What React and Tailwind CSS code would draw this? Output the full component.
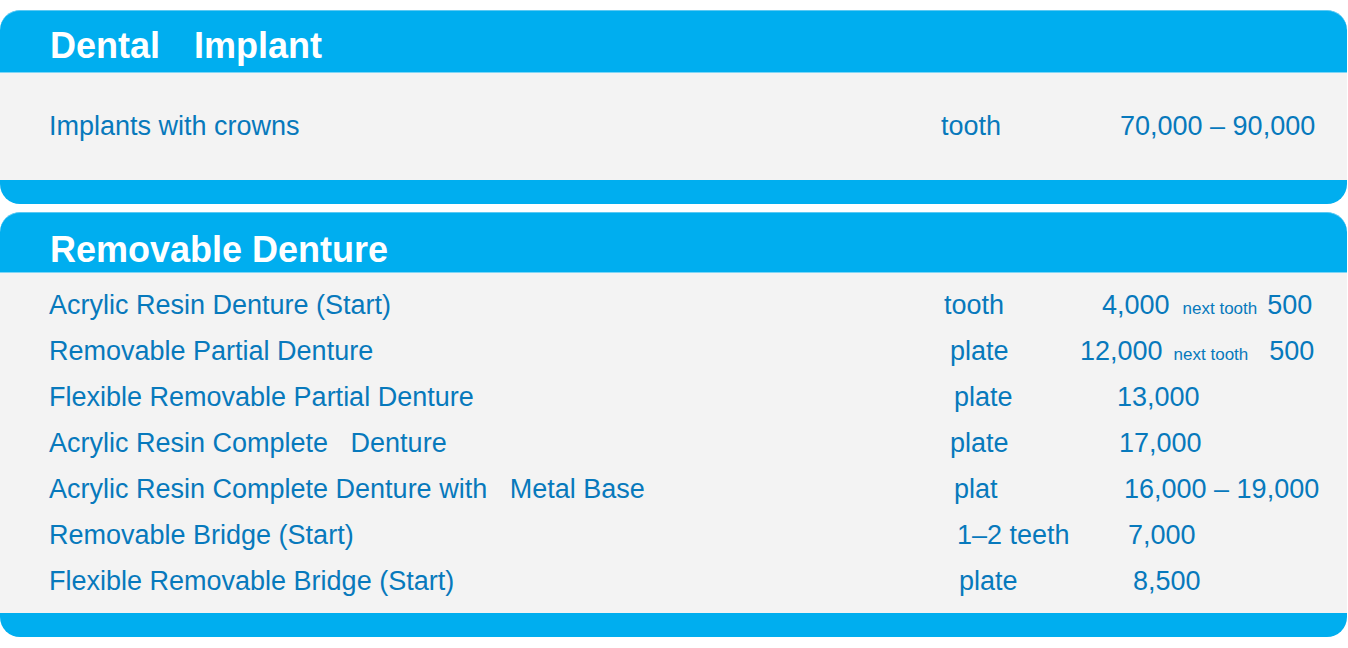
const IMPLANT_ROWS = [
  {
    name: "Implants with crowns",
    unit: "tooth",
    price: "70,000 – 90,000",
    nameW: "w-[892px]",
    unitW: "w-[179px]",
  },
];

const DENTURE_ROWS = [
  {
    name: "Acrylic Resin Denture (Start)",
    unit: "tooth",
    price: "4,000",
    nameW: "w-[895px]",
    unitW: "w-[158px]",
    next: { gap1: "ml-[13px]", gap2: "ml-[10px]", value: "500" },
  },
  {
    name: "Removable Partial Denture",
    unit: "plate",
    price: "12,000",
    nameW: "w-[901px]",
    unitW: "w-[130px]",
    next: { gap1: "ml-[11px]", gap2: "ml-[21px]", value: "500" },
  },
  {
    name: "Flexible Removable Partial Denture",
    unit: "plate",
    price: "13,000",
    nameW: "w-[905px]",
    unitW: "w-[163px]",
  },
  {
    name: "Acrylic Resin Complete   Denture",
    unit: "plate",
    price: "17,000",
    nameW: "w-[901px]",
    unitW: "w-[169px]",
  },
  {
    name: "Acrylic Resin Complete Denture with   Metal Base",
    unit: "plat",
    price: "16,000 – 19,000",
    nameW: "w-[905px]",
    unitW: "w-[170px]",
  },
  {
    name: "Removable Bridge (Start)",
    unit: "1–2 teeth",
    price: "7,000",
    nameW: "w-[908px]",
    unitW: "w-[171px]",
  },
  {
    name: "Flexible Removable Bridge (Start)",
    unit: "plate",
    price: "8,500",
    nameW: "w-[910px]",
    unitW: "w-[174px]",
  },
];

function PriceRow({ row }) {
  return (
    <div className="flex h-[46px] items-center pl-[49px] text-[27px] leading-none text-[#0779bc]">
      <span className={`shrink-0 whitespace-pre ${row.nameW}`}>{row.name}</span>
      <span className={`shrink-0 whitespace-pre ${row.unitW}`}>{row.unit}</span>
      <span className="flex items-baseline whitespace-pre">
        {row.price}
        {row.next && (
          <>
            <span className={`text-[17px] ${row.next.gap1}`}>next tooth</span>
            <span className={row.next.gap2}>{row.next.value}</span>
          </>
        )}
      </span>
    </div>
  );
}

function Panel({ title, headerClass, bodyClass, children }) {
  return (
    <div className="w-[1347px] overflow-hidden rounded-[20px] bg-[#00aeef] border-t border-[#5cc9f3]">
      <div className={`pl-[50px] text-[36px] font-bold leading-[36px] text-white whitespace-pre ${headerClass}`}>
        {title}
      </div>
      <div className={`bg-[#f3f3f3] border-t border-[#7fd6f6] ${bodyClass}`}>{children}</div>
      <div className="h-[24px]" />
    </div>
  );
}

export default function App() {
  return (
    <div className="min-h-screen bg-white pt-[10px] flex flex-col gap-[8px] font-['Liberation_Sans',Arial,sans-serif]">
      <Panel
        title={
          <>
            Dental<span className="ml-[34px]">Implant</span>
          </>
        }
        headerClass="h-[61px] pt-[17px]"
        bodyClass="h-[108px] flex flex-col justify-center"
      >
        {IMPLANT_ROWS.map((row) => (
          <PriceRow key={row.name} row={row} />
        ))}
      </Panel>

      {/* prices per plate / tooth */}
      <Panel title="Removable Denture" headerClass="h-[59px] pt-[19px]" bodyClass="py-[9px]">
        {DENTURE_ROWS.map((row) => (
          <PriceRow key={row.name} row={row} />
        ))}
      </Panel>
    </div>
  );
}
